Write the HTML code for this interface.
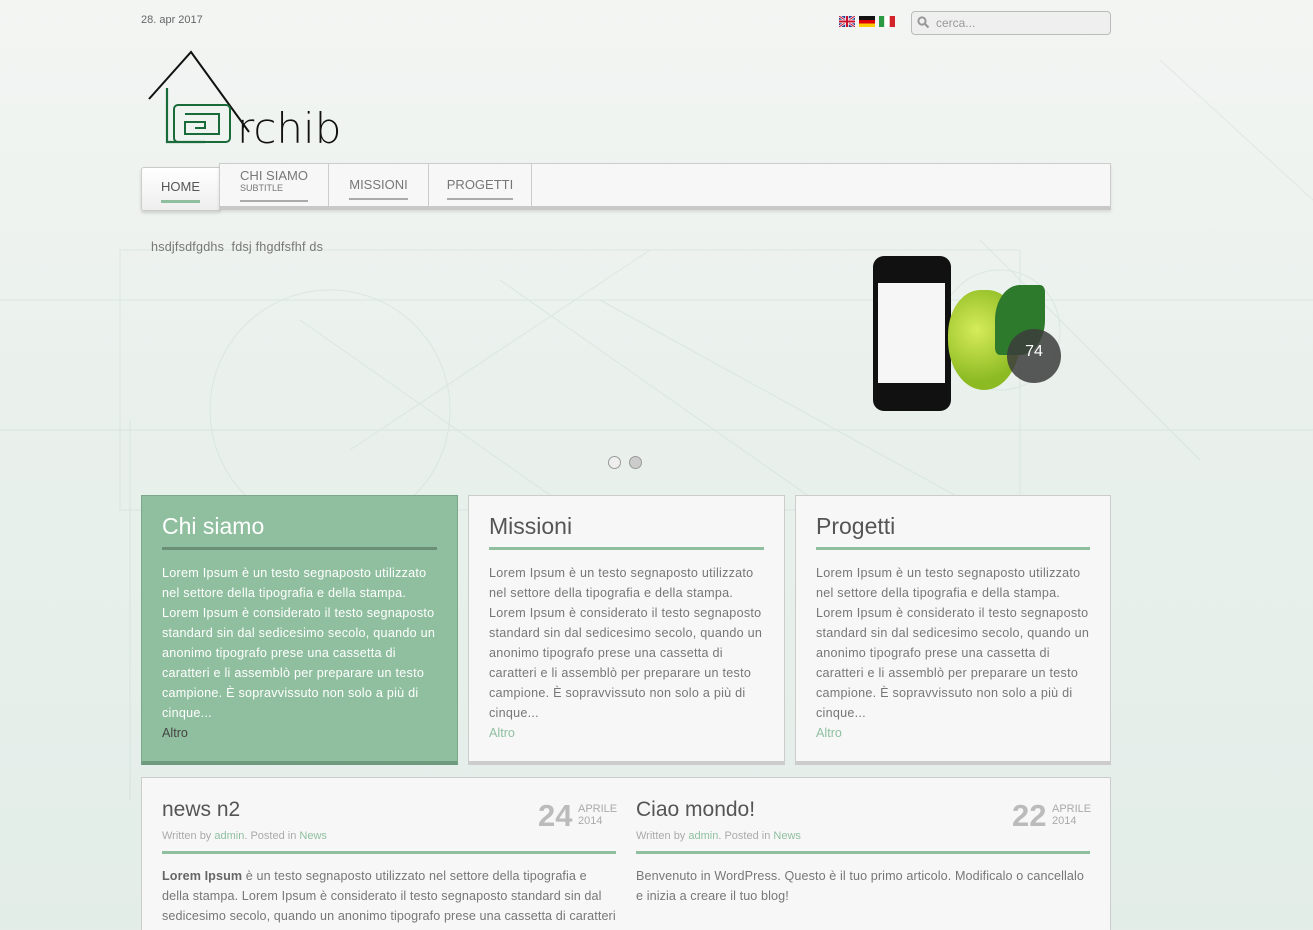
<!DOCTYPE html>
<html><head><meta charset="utf-8"><style>
*{box-sizing:border-box;margin:0;padding:0}
html,body{width:1313px;height:930px;overflow:hidden}
body{background:linear-gradient(180deg,#f3f5f3 0%,#eaf1ed 40%,#e3ede8 100%);font-family:"Liberation Sans",sans-serif;color:#666;position:relative}
.abs{position:absolute}
.date{left:141px;top:14px;font-size:11px;color:#666}
.flag{top:16px;width:16px;height:11px}
.search{left:911px;top:11px;width:200px;height:24px;border:1px solid #bbb;border-radius:4px;background:#efefef;font-size:12px;color:#999;padding:4px 0 0 24px}
.nav{left:219px;top:163px;width:892px;height:47px;background:#f7f7f8;border:1px solid #ccc;border-bottom:4px solid #c8c8c8;box-shadow:0 2px 3px rgba(0,0,0,.1)}
.tab{position:absolute;top:0;height:42px;border-right:1px solid #ccc;font-size:13px;color:#777;text-align:center}
.tab span{display:inline-block;border-bottom:2px solid #aaa;padding-bottom:6px;margin-top:13px}
.home{left:141px;top:167px;width:79px;height:44px;background:linear-gradient(#fff,#eee);border:1px solid #ccc;border-radius:3px 0 0 3px;font-size:13px;color:#555;text-align:center;box-shadow:0 2px 3px rgba(0,0,0,.15)}
.card{top:495px;height:270px;border:1px solid #ccc;background:#f7f7f8;border-bottom:4px solid #ccc;padding:17px 20px 0 20px}
.card h2{font-weight:normal;font-size:23px;color:#555;height:37px;border-bottom:3px solid #8fbf9f;margin-bottom:13px}
.card p{font-size:12.6px;letter-spacing:.25px;line-height:20px;color:#777}
.card a{font-size:12.6px;color:#8fbf9f;line-height:20px}
.green{background:#8fbf9f;border-color:#7aa98a;border-bottom-color:#6e9a7d}
.green h2{color:#fff;border-bottom-color:#6a8f74}
.green p{color:#fff}.green a{color:#444}
.news{left:141px;top:777px;width:970px;height:160px;background:#f7f7f8;border:1px solid #ccc}
.post{position:absolute;top:0;width:454px}
.post h3{font-weight:normal;font-size:21px;color:#555;margin-top:20px}
.meta{font-size:11px;color:#aaa;margin-top:8px}.meta b{font-weight:normal;color:#8fbf9f}
.rule{height:3px;background:#8fbf9f;margin-top:9px}
.post p{font-size:12.6px;letter-spacing:.1px;line-height:20px;color:#777;margin-top:12px}
.dt{position:absolute;left:376px;top:20px;font-size:31px;font-weight:bold;color:#bbb}
.dt small{position:absolute;left:40px;top:5px;font-size:11px;font-weight:normal;line-height:12px;color:#aaa}
</style></head><body>
<svg class="abs" style="left:0;top:0" width="1313" height="930" opacity=".12" stroke="#6a9a85" fill="none">
<rect x="120" y="250" width="900" height="260"/><path d="M300 320 L700 600 M500 280 L900 560 M600 300 L1000 520 M350 450 L650 250 M0 300 H1313 M0 430 H1313 M130 420 V800 M980 240 L1200 460 M1160 60 L1313 200"/><circle cx="330" cy="410" r="120"/><circle cx="1000" cy="330" r="60"/></svg>
<div class="abs date">28. apr 2017</div>
<svg class="abs flag" style="left:839px" viewBox="0 0 16 11"><rect width="16" height="11" fill="#26418f"/><path d="M0 0L16 11M16 0L0 11" stroke="#fff" stroke-width="2.5"/><path d="M0 0L16 11M16 0L0 11" stroke="#c8102e" stroke-width="1"/><path d="M8 0V11M0 5.5H16" stroke="#fff" stroke-width="3.5"/><path d="M8 0V11M0 5.5H16" stroke="#c8102e" stroke-width="2"/></svg>
<svg class="abs flag" style="left:859px" viewBox="0 0 16 11"><rect width="16" height="4" fill="#111"/><rect y="4" width="16" height="3.5" fill="#d00"/><rect y="7.5" width="16" height="3.5" fill="#fc0"/></svg>
<svg class="abs flag" style="left:879px" viewBox="0 0 16 11"><rect width="5.3" height="11" fill="#2a9a45"/><rect x="5.3" width="5.4" height="11" fill="#fff"/><rect x="10.7" width="5.3" height="11" fill="#d2232a"/></svg>
<div class="abs search">cerca...</div>
<svg class="abs" style="left:917px;top:16px" width="13" height="13" viewBox="0 0 13 13"><circle cx="5" cy="5" r="3.6" stroke="#999" stroke-width="2" fill="none"/><path d="M8 8L11.5 11.5" stroke="#999" stroke-width="2.2"/></svg>
<svg class="abs" style="left:145px;top:48px" width="200" height="100" viewBox="0 0 200 100">
<path d="M4 51 L46 4 L104 84" stroke="#111" stroke-width="2" fill="none"/>
<path d="M22 40 V94 H60" stroke="#1a6b3a" stroke-width="2.2" fill="none"/>
<rect x="29" y="57" width="56" height="37" stroke="#1a6b3a" stroke-width="2" fill="none" rx="4"/>
<path d="M40 66 H74 V86 H40 V74 H60 V80 H50" stroke="#1a6b3a" stroke-width="2" fill="none"/>
<text x="92" y="95" font-family="DejaVu Sans" font-size="42" font-weight="200" fill="#111">rchib</text></svg>
<div class="abs home"><span style="display:inline-block;margin-top:11px;padding-bottom:6px;border-bottom:3px solid #8fbf9f">HOME</span></div>
<div class="abs nav">
<div class="tab" style="left:0;width:109px"><span style="margin-top:6px;line-height:11px;text-align:left;border-bottom-width:2px">CHI SIAMO<br><i style="font-style:normal;font-size:9px">SUBTITLE</i></span></div>
<div class="tab" style="left:109px;width:100px"><span>MISSIONI</span></div>
<div class="tab" style="left:209px;width:103px"><span>PROGETTI</span></div>
</div>
<div class="abs" style="left:151px;top:240px;font-size:12.6px;letter-spacing:.2px;color:#777">hsdjfsdfgdhs&nbsp; fdsj fhgdfsfhf ds</div>
<div class="abs" style="left:873px;top:256px;width:78px;height:155px;background:#111;border-radius:11px"></div>
<div class="abs" style="left:878px;top:283px;width:67px;height:100px;background:#f6f6f6"></div>
<div class="abs" style="left:948px;top:290px;width:72px;height:100px;background:radial-gradient(circle at 40% 40%,#d6ec5a,#8cba22 70%);border-radius:45% 45% 50% 50%"></div>
<div class="abs" style="left:995px;top:285px;width:50px;height:70px;background:#2e7a2c;border-radius:50% 10%"></div>
<div class="abs" style="left:1007px;top:329px;width:54px;height:54px;border-radius:50%;background:rgba(60,60,60,.85);color:#fff;font-size:16px;text-align:center;padding-top:14px">74</div>
<div class="abs" style="left:608px;top:456px;width:13px;height:13px;border-radius:50%;border:1px solid #999;background:#eee"></div>
<div class="abs" style="left:629px;top:456px;width:13px;height:13px;border-radius:50%;border:1px solid #999;background:#ccc"></div>
<div class="abs card green" style="left:141px;width:317px"><h2 style="color:#fff">Chi siamo</h2><p>Lorem Ipsum è un testo segnaposto utilizzato nel settore della tipografia e della stampa. Lorem Ipsum è considerato il testo segnaposto standard sin dal sedicesimo secolo, quando un anonimo tipografo prese una cassetta di caratteri e li assemblò per preparare un testo campione. È sopravvissuto non solo a più di cinque...</p><a>Altro</a></div>
<div class="abs card" style="left:468px;width:317px"><h2>Missioni</h2><p>Lorem Ipsum è un testo segnaposto utilizzato nel settore della tipografia e della stampa. Lorem Ipsum è considerato il testo segnaposto standard sin dal sedicesimo secolo, quando un anonimo tipografo prese una cassetta di caratteri e li assemblò per preparare un testo campione. È sopravvissuto non solo a più di cinque...</p><a>Altro</a></div>
<div class="abs card" style="left:795px;width:316px"><h2>Progetti</h2><p>Lorem Ipsum è un testo segnaposto utilizzato nel settore della tipografia e della stampa. Lorem Ipsum è considerato il testo segnaposto standard sin dal sedicesimo secolo, quando un anonimo tipografo prese una cassetta di caratteri e li assemblò per preparare un testo campione. È sopravvissuto non solo a più di cinque...</p><a>Altro</a></div>
<div class="abs news">
<div class="post" style="left:20px;width:454px"><h3>news n2</h3><div class="dt">24<small>APRILE<br>2014</small></div><div class="meta">Written by <b>admin</b>. Posted in <b>News</b></div><div class="rule"></div><p><b style="color:#666">Lorem Ipsum</b> è un testo segnaposto utilizzato nel settore della tipografia e della stampa. Lorem Ipsum è considerato il testo segnaposto standard sin dal sedicesimo secolo, quando un anonimo tipografo prese una cassetta di caratteri e li assemblò</p></div>
<div class="post" style="left:494px;width:454px"><h3>Ciao mondo!</h3><div class="dt">22<small>APRILE<br>2014</small></div><div class="meta">Written by <b>admin</b>. Posted in <b>News</b></div><div class="rule"></div><p>Benvenuto in WordPress. Questo è il tuo primo articolo. Modificalo o cancellalo e inizia a creare il tuo blog!</p></div>
</div>
</body></html>
